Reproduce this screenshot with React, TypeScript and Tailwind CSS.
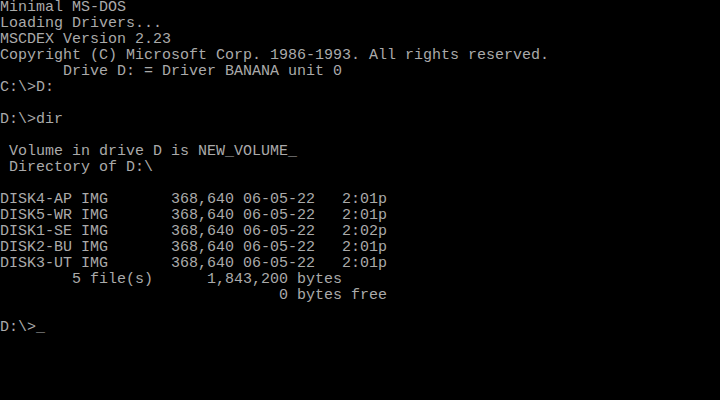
const lines = [
  "Minimal MS-DOS",
  "Loading Drivers...",
  "MSCDEX Version 2.23",
  "Copyright (C) Microsoft Corp. 1986-1993. All rights reserved.",
  "       Drive D: = Driver BANANA unit 0",
  "C:\\>D:",
  "",
  "D:\\>dir",
  "",
  " Volume in drive D is NEW_VOLUME_",
  " Directory of D:\\",
  "",
  "DISK4-AP IMG       368,640 06-05-22   2:01p",
  "DISK5-WR IMG       368,640 06-05-22   2:01p",
  "DISK1-SE IMG       368,640 06-05-22   2:02p",
  "DISK2-BU IMG       368,640 06-05-22   2:01p",
  "DISK3-UT IMG       368,640 06-05-22   2:01p",
  "        5 file(s)      1,843,200 bytes",
  "                               0 bytes free",
  "",
];

export default function App() {
  return (
    <div className="w-[720px] h-[400px] bg-black text-[#aaaaaa] font-['Liberation_Mono',monospace] text-[15px] overflow-hidden">
      {lines.map((line, i) => (
        <div key={i} className="h-4 leading-4 whitespace-pre">
          {line}
        </div>
      ))}
      <div className="h-4 leading-4 whitespace-pre">
        D:\&gt;<span>_</span>
      </div>
    </div>
  );
}
